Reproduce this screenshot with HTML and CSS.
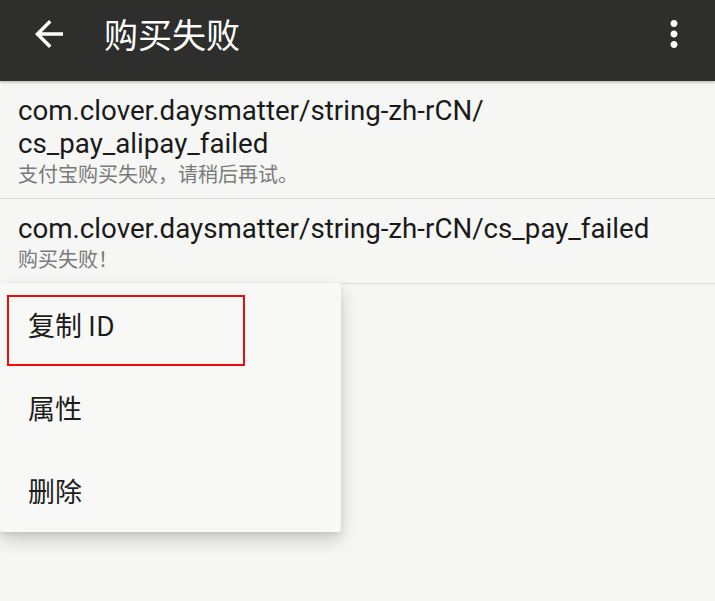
FILE: index.html
```html
<!DOCTYPE html>
<html lang="zh-CN">
<head>
<meta charset="utf-8">
<title>购买失败</title>
<link rel="stylesheet" href="styles.css">
</head>
<body>
<div class="screen">
  <header class="toolbar">
    <div class="toolbar-row">
      <svg class="icon-back" viewBox="0 0 24 24" width="42" height="42"><path d="M20 11H7.83l5.59-5.59L12 4l-8 8 8 8 1.41-1.41L7.83 13H20v-2z" fill="#fff"/></svg>
      <h1 class="title">购买失败</h1>
      <svg class="icon-more" viewBox="0 0 24 24" width="42" height="42"><path d="M12 8c1.1 0 2-.9 2-2s-.9-2-2-2-2 .9-2 2 .9 2 2 2zm0 2c-1.1 0-2 .9-2 2s.9 2 2 2 2-.9 2-2-.9-2-2-2zm0 6c-1.1 0-2 .9-2 2s.9 2 2 2 2-.9 2-2-.9-2-2-2z" fill="#fff"/></svg>
    </div>
  </header>
  <ul class="list">
    <li class="item">
      <div class="item-title">com.clover.daysmatter/string-zh-rCN/<br>cs_pay_alipay_failed</div>
      <div class="item-sub">支付宝购买失败，请稍后再试。</div>
    </li>
    <li class="item">
      <div class="item-title">com.clover.daysmatter/string-zh-rCN/cs_pay_failed</div>
      <div class="item-sub">购买失败！</div>
    </li>
  </ul>
  <div class="menu">
    <div class="menu-item">复制 ID</div>
    <div class="menu-item">属性</div>
    <div class="menu-item">删除</div>
    <div class="highlight"></div>
  </div>
</div>
</body>
</html>
```
FILE: styles.css
```css
html, body {
  margin: 0;
  padding: 0;
}
body {
  background: #f6f7f5;
  font-family: Roboto, "Noto Sans CJK SC", sans-serif;
}
.screen {
  position: relative;
  width: 715px;
  height: 601px;
  overflow: hidden;
  background: #f6f7f5;
}
.toolbar {
  height: 81px;
  background: #2e2f2d;
  box-shadow: 0 1px 3px rgba(0, 0, 0, 0.3);
  position: relative;
  z-index: 1;
}
.toolbar-row {
  height: 68px;
  display: flex;
  align-items: center;
  padding: 0 20px 0 28px;
}
.icon-back {
  display: block;
  flex: none;
}
.title {
  margin: 0 0 0 34px;
  flex: 1;
  font-family: "Noto Sans CJK SC", sans-serif;
  font-weight: 400;
  font-size: 34px;
  color: #ffffff;
  line-height: 1;
}
.icon-more {
  display: block;
  flex: none;
}
.list {
  list-style: none;
  margin: 0;
  padding: 0;
}
.item {
  padding: 13px 18px 11px;
  border-bottom: 1px solid #dcdddb;
}
.item-title {
  font-size: 27.7px;
  line-height: 33px;
  color: #1a1a1a;
}
.item-sub {
  font-family: "Noto Sans CJK SC", sans-serif;
  font-size: 20px;
  line-height: 27px;
  color: #7a7a7a;
}
.menu {
  position: absolute;
  left: 0;
  top: 283px;
  width: 341px;
  background: #f8f9f7;
  border-radius: 0 2px 3px 3px;
  box-shadow: 0 8px 18px rgba(0, 0, 0, 0.18), 0 2px 5px rgba(0, 0, 0, 0.08);
  z-index: 2;
}
.menu-item {
  height: 83px;
  display: flex;
  align-items: center;
  padding-left: 28px;
  font-family: "Noto Sans CJK SC", sans-serif;
  font-size: 27px;
  color: #1c1c1c;
}
.highlight {
  position: absolute;
  left: 7px;
  top: 12px;
  width: 234px;
  height: 67px;
  border: 2px solid #f00a0a;
}
```
